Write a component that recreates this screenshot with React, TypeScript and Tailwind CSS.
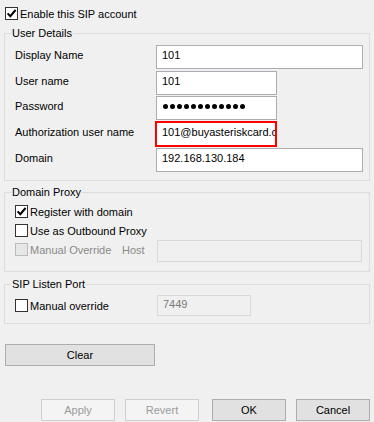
import React from 'react';

type CheckProps = {
    checked?: boolean,
    disabled?: boolean,
    label: string
}

const CheckBox = ({ checked, disabled, label }: CheckProps) => {
    return (
        <span className='flex items-center'>
            <span className={disabled
                ? 'flex h-[13px] w-[13px] shrink-0 items-center justify-center border border-[#bcbcbc] bg-[#e6e6e6]'
                : 'flex h-[13px] w-[13px] shrink-0 items-center justify-center border border-[#333333] bg-white'}>
                {checked && (
                    <svg width='11' height='11' viewBox='0 0 11 11'>
                        <path d='M1.6 5.4 L4.3 8.2 L9.6 2' fill='none' stroke='#000' strokeWidth='2' />
                    </svg>
                )}
            </span>
            <span className={disabled ? 'ml-[2px] whitespace-nowrap text-[#8a8a8a]' : 'ml-[2px] whitespace-nowrap'}>{label}</span>
        </span>
    )
}

const Field = ({ label, children }: { label: string, children: React.ReactNode }) => {
    return (
        <div className='flex items-center'>
            <span className='w-[151px] pb-[4px] pl-[10px]'>{label}</span>
            {children}
        </div>
    )
}

const TextBox = ({ value, wide }: { value: string, wide?: boolean }) => {
    return (
        <div className={wide
            ? 'flex h-[24px] w-[207px] items-center border border-[#abadb3] bg-white pb-[4px] pl-[5px]'
            : 'flex h-[24px] w-[121px] items-center border border-[#abadb3] bg-white pb-[4px] pl-[5px]'}>
            {value}
        </div>
    )
}

const Button = ({ label, disabled, className }: { label: string, disabled?: boolean, className: string }) => {
    return (
        <button type='button' className={`${className} flex h-[22px] items-center justify-center border ${disabled ? 'border-[#cfcfcf] bg-[#f4f4f4] text-[#9a9a9a]' : 'border-[#adadad] bg-[#e1e1e1] text-black'}`}>
            {label}
        </button>
    )
}

export default function App() {
    return (
        <div className="h-[422px] w-[374px] overflow-hidden bg-[#f0f0f0] font-['Liberation_Sans',Arial,sans-serif] text-[11px] leading-[14px] text-black">
            <div className='ml-[5px] mt-[7px] flex h-[13px] items-center'>
                <CheckBox checked label='Enable this SIP account' />
            </div>

            <fieldset className='mx-[4px] mt-[6px] border border-[#dcdcdc] pb-[8px]'>
                <legend className='ml-[6px] px-[1px]'>User Details</legend>
                <div className='mt-[5px] flex flex-col'>
                    <Field label='Display Name'><TextBox wide value='101' /></Field>
                    <div className='mt-[2px]'><Field label='User name'><TextBox value='101' /></Field></div>
                    <div className='mt-[1px]'>
                        <Field label='Password'>
                            <div className='flex h-[24px] w-[121px] items-center gap-[2px] border border-[#abadb3] bg-white pb-[4px] pl-[6px]' aria-label='password'>
                                {Array.from({ length: 12 }).map((_, i) => (
                                    <span key={i} className='h-[5px] w-[5px] rounded-full bg-black' />
                                ))}
                            </div>
                        </Field>
                    </div>
                    <div className='mt-[1px]'>
                        <Field label='Authorization user name'>
                            <div className='-ml-[1px] flex h-[26px] w-[122px] items-center overflow-hidden whitespace-nowrap border-2 border-[#ff0000] bg-white pb-[4px] pl-[5px]'>
                                101@buyasteriskcard.com
                            </div>
                        </Field>
                    </div>
                    <div className='mt-[1px]'><Field label='Domain'><TextBox wide value='192.168.130.184' /></Field></div>
                </div>
            </fieldset>

            <fieldset className='mx-[4px] mt-[4px] border border-[#dcdcdc] pb-[9px]'>
                <legend className='ml-[6px] px-[1px]'>Domain Proxy</legend>
                <div className='mt-[6px] flex h-[13px] items-center pl-[10px]'>
                    <CheckBox checked label='Register with domain' />
                </div>
                <div className='mt-[6px] flex h-[13px] items-center pl-[10px]'>
                    <CheckBox label='Use as Outbound Proxy' />
                </div>
                <div className='mt-[3px] flex h-[22px] items-center pl-[10px]'>
                    <div className='w-[107px] pb-[3px]'>
                        <CheckBox disabled label='Manual Override' />
                    </div>
                    <span className='w-[35px] pb-[3px] text-[#8a8a8a]'>Host</span>
                    <div className='h-[22px] w-[205px] border border-[#d9d9d9] bg-[#f0f0f0]' />
                </div>
            </fieldset>

            <fieldset className='mx-[4px] mt-[5px] border border-[#dcdcdc] pb-[7px]'>
                <legend className='ml-[6px] px-[1px]'>SIP Listen Port</legend>
                <div className='mt-[4px] flex h-[21px] items-center pl-[10px]'>
                    <div className='w-[142px]'>
                        <CheckBox label='Manual override' />
                    </div>
                    <div className='flex h-[21px] w-[94px] items-center border border-[#d9d9d9] bg-[#f0f0f0] pb-[4px] pl-[5px] text-[#7a7a7a]'>
                        7449
                    </div>
                </div>
            </fieldset>

            <Button label='Clear' className='ml-[5px] mt-[20px] w-[150px]' />

            <div className='mt-[33px] flex'>
                <Button disabled label='Apply' className='ml-[41px] w-[74px]' />
                <Button disabled label='Revert' className='ml-[10px] w-[74px]' />
                <Button label='OK' className='ml-[13px] w-[74px]' />
                <Button label='Cancel' className='ml-[10px] w-[74px]' />
            </div>
        </div>
    );
}
